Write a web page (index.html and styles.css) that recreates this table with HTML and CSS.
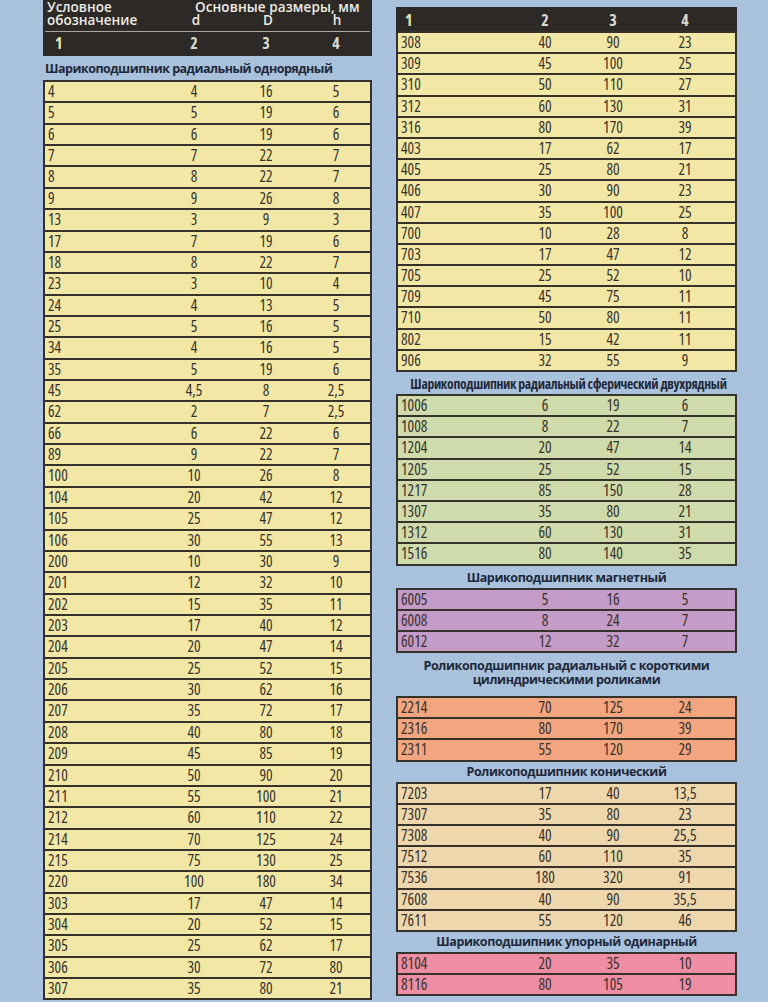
FILE: index.html
```html
<!DOCTYPE html>
<html lang="ru">
<head>
<meta charset="utf-8">
<title>Подшипники</title>
<link rel="stylesheet" href="styles.css">
</head>
<body>
<div class="page">
  <div class="col left">
    <div class="head">
      <div class="hrow h1"><span>Условное</span><span class="hspan">Основные размеры, мм</span></div>
      <div class="hrow h2"><span>обозначение</span><span class="c">d</span><span class="c">D</span><span class="c">h</span></div>
      <div class="hsep"></div>
      <div class="hnum"><span class="first">1</span><span class="c">2</span><span class="c">3</span><span class="c">4</span></div>
    </div>
    <div class="title tleft">Шарикоподшипник радиальный однорядный</div>
    <div class="tbl yellow">
      <div class="r"><span>4</span><span>4</span><span>16</span><span>5</span></div>
      <div class="r"><span>5</span><span>5</span><span>19</span><span>6</span></div>
      <div class="r"><span>6</span><span>6</span><span>19</span><span>6</span></div>
      <div class="r"><span>7</span><span>7</span><span>22</span><span>7</span></div>
      <div class="r"><span>8</span><span>8</span><span>22</span><span>7</span></div>
      <div class="r"><span>9</span><span>9</span><span>26</span><span>8</span></div>
      <div class="r"><span>13</span><span>3</span><span>9</span><span>3</span></div>
      <div class="r"><span>17</span><span>7</span><span>19</span><span>6</span></div>
      <div class="r"><span>18</span><span>8</span><span>22</span><span>7</span></div>
      <div class="r"><span>23</span><span>3</span><span>10</span><span>4</span></div>
      <div class="r"><span>24</span><span>4</span><span>13</span><span>5</span></div>
      <div class="r"><span>25</span><span>5</span><span>16</span><span>5</span></div>
      <div class="r"><span>34</span><span>4</span><span>16</span><span>5</span></div>
      <div class="r"><span>35</span><span>5</span><span>19</span><span>6</span></div>
      <div class="r"><span>45</span><span>4,5</span><span>8</span><span>2,5</span></div>
      <div class="r"><span>62</span><span>2</span><span>7</span><span>2,5</span></div>
      <div class="r"><span>66</span><span>6</span><span>22</span><span>6</span></div>
      <div class="r"><span>89</span><span>9</span><span>22</span><span>7</span></div>
      <div class="r"><span>100</span><span>10</span><span>26</span><span>8</span></div>
      <div class="r"><span>104</span><span>20</span><span>42</span><span>12</span></div>
      <div class="r"><span>105</span><span>25</span><span>47</span><span>12</span></div>
      <div class="r"><span>106</span><span>30</span><span>55</span><span>13</span></div>
      <div class="r"><span>200</span><span>10</span><span>30</span><span>9</span></div>
      <div class="r"><span>201</span><span>12</span><span>32</span><span>10</span></div>
      <div class="r"><span>202</span><span>15</span><span>35</span><span>11</span></div>
      <div class="r"><span>203</span><span>17</span><span>40</span><span>12</span></div>
      <div class="r"><span>204</span><span>20</span><span>47</span><span>14</span></div>
      <div class="r"><span>205</span><span>25</span><span>52</span><span>15</span></div>
      <div class="r"><span>206</span><span>30</span><span>62</span><span>16</span></div>
      <div class="r"><span>207</span><span>35</span><span>72</span><span>17</span></div>
      <div class="r"><span>208</span><span>40</span><span>80</span><span>18</span></div>
      <div class="r"><span>209</span><span>45</span><span>85</span><span>19</span></div>
      <div class="r"><span>210</span><span>50</span><span>90</span><span>20</span></div>
      <div class="r"><span>211</span><span>55</span><span>100</span><span>21</span></div>
      <div class="r"><span>212</span><span>60</span><span>110</span><span>22</span></div>
      <div class="r"><span>214</span><span>70</span><span>125</span><span>24</span></div>
      <div class="r"><span>215</span><span>75</span><span>130</span><span>25</span></div>
      <div class="r"><span>220</span><span>100</span><span>180</span><span>34</span></div>
      <div class="r"><span>303</span><span>17</span><span>47</span><span>14</span></div>
      <div class="r"><span>304</span><span>20</span><span>52</span><span>15</span></div>
      <div class="r"><span>305</span><span>25</span><span>62</span><span>17</span></div>
      <div class="r"><span>306</span><span>30</span><span>72</span><span>80</span></div>
      <div class="r"><span>307</span><span>35</span><span>80</span><span>21</span></div>
    </div>
  </div>

  <div class="col right">
    <div class="hnum rhead"><span class="first">1</span><span class="c">2</span><span class="c">3</span><span class="c">4</span></div>
    <div class="tbl yellow">
      <div class="r"><span>308</span><span>40</span><span>90</span><span>23</span></div>
      <div class="r"><span>309</span><span>45</span><span>100</span><span>25</span></div>
      <div class="r"><span>310</span><span>50</span><span>110</span><span>27</span></div>
      <div class="r"><span>312</span><span>60</span><span>130</span><span>31</span></div>
      <div class="r"><span>316</span><span>80</span><span>170</span><span>39</span></div>
      <div class="r"><span>403</span><span>17</span><span>62</span><span>17</span></div>
      <div class="r"><span>405</span><span>25</span><span>80</span><span>21</span></div>
      <div class="r"><span>406</span><span>30</span><span>90</span><span>23</span></div>
      <div class="r"><span>407</span><span>35</span><span>100</span><span>25</span></div>
      <div class="r"><span>700</span><span>10</span><span>28</span><span>8</span></div>
      <div class="r"><span>703</span><span>17</span><span>47</span><span>12</span></div>
      <div class="r"><span>705</span><span>25</span><span>52</span><span>10</span></div>
      <div class="r"><span>709</span><span>45</span><span>75</span><span>11</span></div>
      <div class="r"><span>710</span><span>50</span><span>80</span><span>11</span></div>
      <div class="r"><span>802</span><span>15</span><span>42</span><span>11</span></div>
      <div class="r"><span>906</span><span>32</span><span>55</span><span>9</span></div>
    </div>

    <div class="title tnarrow">Шарикоподшипник радиальный сферический двухрядный</div>
    <div class="tbl green">
      <div class="r"><span>1006</span><span>6</span><span>19</span><span>6</span></div>
      <div class="r"><span>1008</span><span>8</span><span>22</span><span>7</span></div>
      <div class="r"><span>1204</span><span>20</span><span>47</span><span>14</span></div>
      <div class="r"><span>1205</span><span>25</span><span>52</span><span>15</span></div>
      <div class="r"><span>1217</span><span>85</span><span>150</span><span>28</span></div>
      <div class="r"><span>1307</span><span>35</span><span>80</span><span>21</span></div>
      <div class="r"><span>1312</span><span>60</span><span>130</span><span>31</span></div>
      <div class="r"><span>1516</span><span>80</span><span>140</span><span>35</span></div>
    </div>

    <div class="title">Шарикоподшипник магнетный</div>
    <div class="tbl purple">
      <div class="r"><span>6005</span><span>5</span><span>16</span><span>5</span></div>
      <div class="r"><span>6008</span><span>8</span><span>24</span><span>7</span></div>
      <div class="r"><span>6012</span><span>12</span><span>32</span><span>7</span></div>
    </div>

    <div class="title ttwo">Роликоподшипник радиальный с короткими<br>цилиндрическими роликами</div>
    <div class="tbl orange">
      <div class="r"><span>2214</span><span>70</span><span>125</span><span>24</span></div>
      <div class="r"><span>2316</span><span>80</span><span>170</span><span>39</span></div>
      <div class="r"><span>2311</span><span>55</span><span>120</span><span>29</span></div>
    </div>

    <div class="title tshort">Роликоподшипник конический</div>
    <div class="tbl beige">
      <div class="r"><span>7203</span><span>17</span><span>40</span><span>13,5</span></div>
      <div class="r"><span>7307</span><span>35</span><span>80</span><span>23</span></div>
      <div class="r"><span>7308</span><span>40</span><span>90</span><span>25,5</span></div>
      <div class="r"><span>7512</span><span>60</span><span>110</span><span>35</span></div>
      <div class="r"><span>7536</span><span>180</span><span>320</span><span>91</span></div>
      <div class="r"><span>7608</span><span>40</span><span>90</span><span>35,5</span></div>
      <div class="r"><span>7611</span><span>55</span><span>120</span><span>46</span></div>
    </div>

    <div class="title tshort">Шарикоподшипник упорный одинарный</div>
    <div class="tbl pink">
      <div class="r"><span>8104</span><span>20</span><span>35</span><span>10</span></div>
      <div class="r"><span>8116</span><span>80</span><span>105</span><span>19</span></div>
    </div>
  </div>
</div>
</body>
</html>
```

FILE: styles.css
```css
html, body {
  margin: 0;
  padding: 0;
}

body {
  background: #a8c1dd;
  width: 768px;
  height: 1002px;
  overflow: hidden;
  font-family: "Open Sans", "DejaVu Sans Condensed", sans-serif;
  color: #36332c;
}

.page {
  display: grid;
  grid-template-columns: 329px 341px;
  column-gap: 24px;
  padding-left: 43px;
}

.col {
  display: flex;
  flex-direction: column;
}

.right {
  padding-top: 7px;
}

/* ---------- header ---------- */
.head {
  background: #2d2926;
  border: 2px solid #2d2926;
  border-top: 0;
  color: #ecebe4;
}

.hrow {
  display: grid;
  grid-template-columns: 113px 72px 72px 1fr;
  padding-left: 2px;
  font-family: "Open Sans", "Liberation Sans", sans-serif;
  font-weight: 600;
  font-size: 13.5px;
}

.h1 {
  height: 13px;
  line-height: 14px;
}

.h2 {
  height: 16px;
  line-height: 15px;
}

.hspan {
  grid-column: 2 / 5;
  padding-left: 35px;
  letter-spacing: 0.1px;
}

.hrow .c {
  text-align: center;
}

.hsep {
  height: 1px;
  background: #a9a69d;
  margin: 2px 0 1px;
}

.hnum {
  display: grid;
  grid-template-columns: 113px 72px 72px 1fr;
  height: 21px;
  line-height: 21px;
  font-family: "Open Sans", "DejaVu Sans Condensed", sans-serif;
  font-stretch: 75%;
  font-weight: 700;
  font-size: 16px;
  color: #dcdcd4;
}

.hnum .first {
  padding-left: 10px;
  color: #e8e6b8;
}

.hnum .c {
  text-align: center;
}

.rhead {
  background: #2d2926;
  border: 2px solid #2d2926;
  border-bottom: 0;
  height: 22px;
  line-height: 22px;
  grid-template-columns: 113px 68px 68px 76px;
}

.rhead .first {
  padding-left: 7px;
}

/* ---------- titles ---------- */
.title {
  font-family: "Open Sans", "Liberation Sans", sans-serif;
  font-weight: 700;
  font-size: 12.5px;
  letter-spacing: -0.4px;
  color: #1f2838;
  text-align: center;
  white-space: nowrap;
  line-height: 15px;
  padding: 4px 0 3px;
}

.tleft {
  text-align: left;
  padding: 5px 0 4px 2px;
  letter-spacing: -0.5px;
}

.tnarrow {
  font-size: 13.6px;
  font-stretch: 75%;
  letter-spacing: -0.3px;
  padding-left: 4px;
}

.ttwo {
  line-height: 14px;
  padding: 6px 0 9px;
}

.tshort {
  padding: 2px 0 3px;
}

/* ---------- tables ---------- */
.tbl {
  border: 2px solid #35322c;
}

.r {
  display: grid;
  grid-template-columns: 113px 68px 68px 76px;
  height: 19.2px;
  line-height: 19.2px;
  font-size: 15.5px;
  font-stretch: 75%;
  border-bottom: 2px solid #35322c;
}

.r:last-child {
  border-bottom: 0;
}

.left .r {
  grid-template-columns: 113px 72px 72px 1fr;
  height: 19.37px;
  line-height: 19.37px;
}

.r span {
  text-align: center;
}

.r span:first-child {
  text-align: left;
  padding-left: 3px;
}

.yellow { background: #f3e7a6; }
.green { background: #d0dbab; }
.purple { background: #c59bc8; }
.orange { background: #f3a580; }
.beige { background: #efd7ad; }
.pink { background: #ee8da4; }
```
